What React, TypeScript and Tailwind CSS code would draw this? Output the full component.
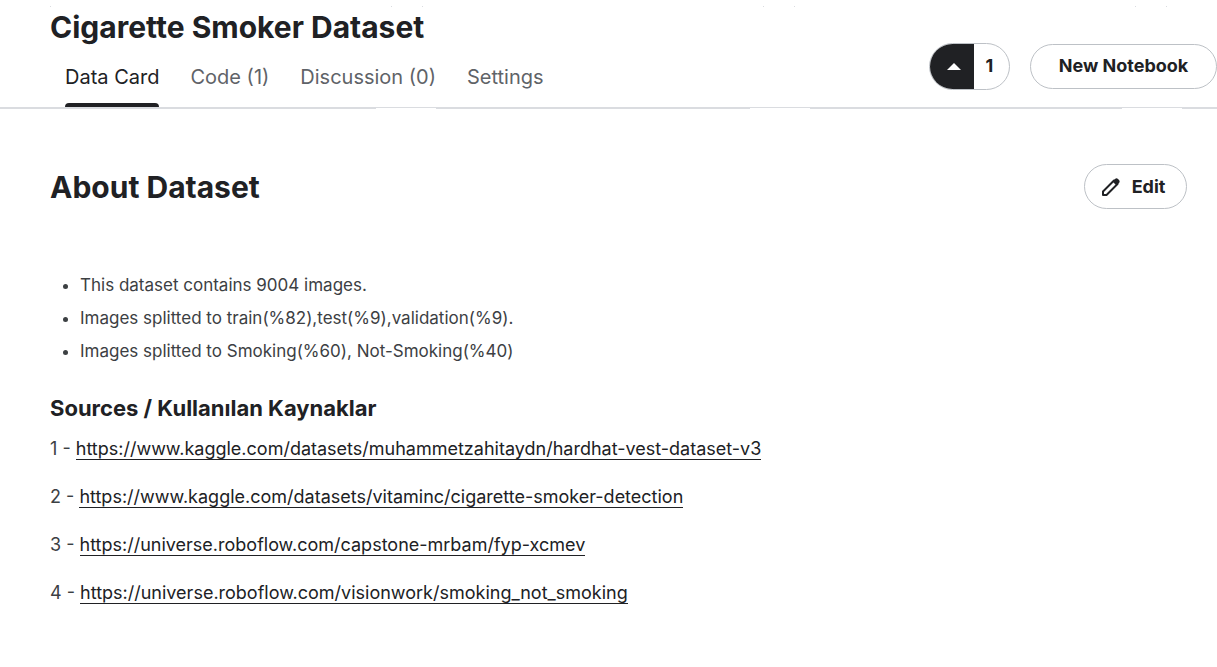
const tabs = ["Data Card", "Code (1)", "Discussion (0)", "Settings"];

const facts = [
  "This dataset contains 9004 images.",
  "Images splitted to train(%82),test(%9),validation(%9).",
  "Images splitted to Smoking(%60), Not-Smoking(%40)",
];

const sources = [
  "https://www.kaggle.com/datasets/muhammetzahitaydn/hardhat-vest-dataset-v3",
  "https://www.kaggle.com/datasets/vitaminc/cigarette-smoker-detection",
  "https://universe.roboflow.com/capstone-mrbam/fyp-xcmev",
  "https://universe.roboflow.com/visionwork/smoking_not_smoking",
];

const cards = [0, 1, 2, 3];

/* Top corners of the cards scrolled beneath the sticky header */
function CardCorners() {
  return (
    <div aria-hidden="true" className="flex gap-[30px] overflow-hidden pt-[6px] pl-[50px]">
      {cards.map((c) => (
        <div key={c} className="flex w-[342px] shrink-0 justify-between">
          <span className="size-px bg-[#dadce0]" />
          <span className="size-px bg-[#dadce0]" />
        </div>
      ))}
    </div>
  );
}

/* Bottom edges of the same cards, showing just under the header */
function CardEdges() {
  return (
    <div aria-hidden="true" className="flex gap-[60px] overflow-hidden">
      <span className="h-px w-[376px] shrink-0 bg-[#dadce0]" />
      <span className="h-px w-[314px] shrink-0 bg-[#dadce0]" />
      <span className="h-px w-[312px] shrink-0 bg-[#dadce0]" />
      <span className="h-px w-[312px] shrink-0 bg-[#dadce0]" />
    </div>
  );
}

function Header() {
  return (
    <header>
      <CardCorners />
      <div className="flex justify-between border-b border-[#dadce0]">
        <div className="pl-[50px]">
          <h1 className="text-[30px] leading-10 font-bold whitespace-nowrap">Cigarette Smoker Dataset</h1>
          <nav className="flex gap-[31px] pl-[15px]">
            {tabs.map((tab, i) => (
              <a
                key={tab}
                href="#"
                className={
                  i === 0
                    ? "flex h-15 flex-col justify-between pt-4 text-xl text-[#202124] after:h-1 after:rounded-t-sm after:bg-[#202124]"
                    : "flex h-15 flex-col pt-4 text-xl text-[#5f6368]"
                }
              >
                {tab}
              </a>
            ))}
          </nav>
        </div>
        <div className="flex items-center gap-5 pt-[18px]">
          <div className="flex h-[47px] w-[81px] overflow-hidden rounded-full border border-[#bdc1c6]">
            <button aria-label="Upvote" className="flex w-11 items-center justify-center bg-[#202124] pl-1">
              <svg width="14" height="7" viewBox="0 0 14 7" fill="white"><path d="M0 7L7 0L14 7Z" /></svg>
            </button>
            <span className="flex flex-1 items-center justify-center pr-1 text-lg font-bold">1</span>
          </div>
          <button className="h-[45px] w-[187px] rounded-full border border-[#bdc1c6] text-lg font-bold">New Notebook</button>
        </div>
      </div>
      <CardEdges />
    </header>
  );
}

function PencilIcon() {
  return (
    <svg width="18" height="18" viewBox="0 0 18 18" aria-hidden="true">
      <path d="M1 17V13.5L12 2.5L15.5 6L4.5 17Z" fill="none" stroke="#202124" strokeWidth="2" strokeLinejoin="round" />
      <path d="M10.5 3.5L13 1Q14.5 -.3 16 1L17 2Q18.300 3.500 17 5L14.500 7.500Z" fill="#202124" />
    </svg>
  );
}

export default function App() {
  return (
    <div className="min-h-screen bg-white font-['Inter',sans-serif] text-[#202124]">
      <Header />
      <main className="pt-[55px] pr-[30px] pl-[50px]">
        <div className="flex items-center justify-between">
          <h2 className="text-[30px] leading-10 font-bold">About Dataset</h2>
          <button className="flex h-[45px] w-[103px] items-center justify-center gap-3 rounded-full border border-[#bdc1c6] pr-1 text-lg font-bold">
            <PencilIcon />
            Edit
          </button>
        </div>
        <ul className="mt-[60px] list-disc pl-[30px] text-[17px] leading-[33px] text-[#3c4043]">
          {facts.map((fact) => <li key={fact}>{fact}</li>)}
        </ul>
        <h3 className="mt-6 text-[22px] leading-8 font-bold">Sources / Kullanılan Kaynaklar</h3>
        <div className="mt-[9px] flex flex-col gap-4 text-lg leading-8 text-[#3c4043]">
          {sources.map((url, i) => (
            <p key={url}>
              {i + 1} - <a href={url} className="border-b border-[#202124] text-[#202124]">{url}</a>
            </p>
          ))}
        </div>
      </main>
    </div>
  );
}
